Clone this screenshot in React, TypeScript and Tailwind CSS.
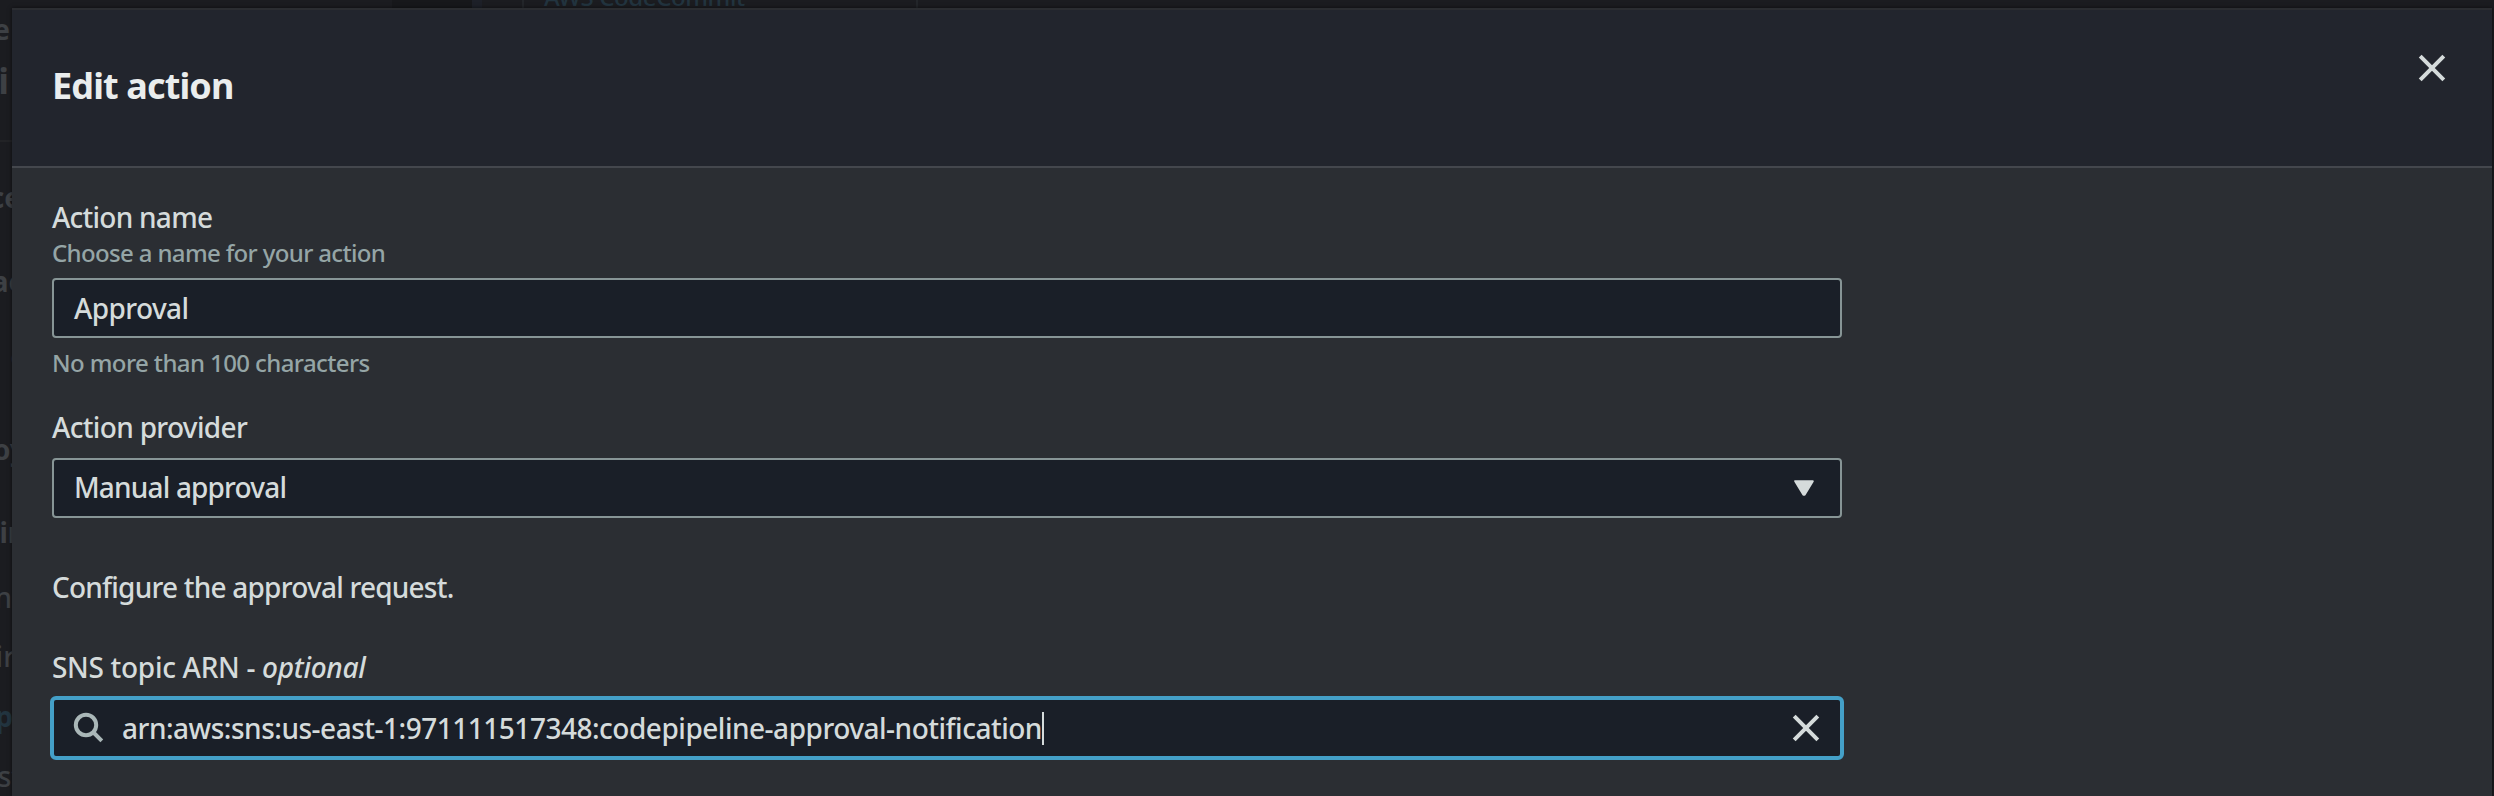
import type { ReactNode } from 'react';

function Cross() {
  return (
    <svg width="28" height="28" viewBox="0 0 28 28" fill="none" stroke="#d5dbdb" strokeWidth="4">
      <path d="M2.2 2.2 25.8 25.8M25.8 2.2 2.2 25.8" />
    </svg>
  );
}

function Label({ className, children }: { className: string; children: ReactNode }) {
  return <div className={`h-10 text-[28px] leading-10 font-medium whitespace-nowrap ${className}`}>{children}</div>;
}

function Hint({ className, children }: { className: string; children: ReactNode }) {
  return <div className={`h-8 text-[24px] leading-8 font-medium whitespace-nowrap text-[#95a5a6] ${className}`}>{children}</div>;
}

function BehindRow({ className, children }: { className: string; children?: ReactNode }) {
  return <div className={`flex w-3 shrink-0 items-end justify-end overflow-hidden whitespace-nowrap ${className}`}>{children}</div>;
}

function PageBehind() {
  return (
    <div className="absolute inset-0 overflow-hidden bg-[#1b1c20] text-[#3d4044]">
      <div className="absolute top-0 left-[392px] flex h-2 overflow-hidden">
        <div className="w-20 shrink-0 bg-[#17181b]" />
        <div className="w-[10px] shrink-0 bg-[#1d2028]" />
        <div className="w-10 shrink-0" />
        <div className="w-[2px] shrink-0 bg-[#23262a]" />
        <div className="w-[392px] shrink-0 pl-[20px] text-[24px] leading-[40px] font-medium tracking-[-0.4px] text-[#22343f]">
          <div className="-mt-[23px] whitespace-nowrap">AWS CodeCommit</div>
        </div>
        <div className="w-[2px] shrink-0 bg-[#23262a]" />
      </div>
      <div className="flex w-3 flex-col overflow-hidden">
        <BehindRow className="mt-[9px] h-10 pr-[2px] text-[28px] leading-10 font-bold">e</BehindRow>
        <BehindRow className="mt-[6px] h-[52px] pr-[3px] text-[36px] leading-[52px] font-bold">i</BehindRow>
        <div className="mt-[33px] h-[2px] bg-[#222326]" />
        <BehindRow className="mt-[35px] h-10 text-[28px] leading-10 font-bold"><span className="-mr-[9px]">ce</span></BehindRow>
        <BehindRow className="mt-[44px] h-10 text-[28px] leading-10 font-bold"><span className="-mr-[11px]">ac</span></BehindRow>
        <BehindRow className="mt-[35px] h-10 text-[28px] leading-10 font-bold"><span className="-mr-[13px]">c</span></BehindRow>
        <BehindRow className="mt-[53px] h-10 text-[28px] leading-10 font-bold"><span className="-mr-[14px]">oy</span></BehindRow>
        <BehindRow className="mt-[43px] h-10 text-[28px] leading-10 font-bold"><span className="-mr-[14px]">in</span></BehindRow>
        <BehindRow className="mt-[25px] h-10 text-[28px] leading-10 font-medium"><span>n</span></BehindRow>
        <BehindRow className="mt-[19px] h-10 text-[28px] leading-10 font-medium"><span className="-mr-[3px]">ir</span></BehindRow>
        <BehindRow className="mt-[20px] h-10 text-[28px] leading-10 font-bold text-[#22343f]"><span className="-mr-[1px]">p</span></BehindRow>
        <BehindRow className="mt-[20px] h-10 text-[28px] leading-10 font-medium"><span className="-mr-[10px]">st</span></BehindRow>
      </div>
    </div>
  );
}

export default function App() {
  return (
    <div className="relative flex h-[796px] w-[2494px] overflow-hidden font-['Noto_Sans','Open_Sans',sans-serif] text-[#d5dbdb]">
      <PageBehind />
      <div className="relative mt-2 ml-3 flex w-[2480px] flex-col bg-[#2b2e33] shadow-[0_0_4px_rgba(0,0,0,0.6)]">
        <header className="flex h-[160px] shrink-0 items-start justify-between border-y-2 border-t-[#2b2d31] border-b-[#44474d] bg-[#22252d] pr-[46px] pl-10">
          <h2 className="mt-[52px] text-[36px] leading-[48px] font-bold tracking-[-0.87px] text-[#eaeded]">Edit action</h2>
          <button className="mt-11" aria-label="Close">
            <Cross />
          </button>
        </header>
        <main className="flex w-[1830px] flex-col pt-[29px] pl-10">
          <Label className="tracking-[-0.75px]">Action name</Label>
          <Hint className="tracking-[-0.65px]">Choose a name for your action</Hint>
          <div className="mt-[9px] flex h-[60px] items-center rounded-[4px] border-2 border-[#879596] bg-[#1a1f28] px-5">
            <Label className="tracking-[-0.6px]">Approval</Label>
          </div>
          <Hint className="mt-[9px] tracking-[-0.6px]">No more than 100 characters</Hint>
          <Label className="mt-[28px] tracking-[-0.67px]">Action provider</Label>
          <div className="mt-[11px] flex h-[60px] items-center justify-between rounded-[4px] border-2 border-[#879596] bg-[#1a1f28] pr-[26px] pl-5">
            <Label className="-mt-[2px] tracking-[-0.83px]">Manual approval</Label>
            <svg width="20" height="16" viewBox="0 0 20 16" fill="#d5dbdb" stroke="#d5dbdb" strokeWidth="2" strokeLinejoin="round">
              <path d="M1.2 1.2h17.6L10.6 14.8H9.4z" />
            </svg>
          </div>
          <Label className="mt-[49px] tracking-[-0.78px]">Configure the approval request.</Label>
          <Label className="mt-10 tracking-[-0.3px]">
            SNS topic ARN - <i>optional</i>
          </Label>
          <div className="mt-[9px] -mr-[2px] -ml-[2px] flex h-16 items-center rounded-[6px] border-4 border-[#44a0c8] bg-[#1a1f28] pr-[20px] pl-[19px]">
            <svg width="32" height="32" viewBox="0 0 32 32" fill="none" stroke="#aab7b8" strokeWidth="4">
              <circle cx="13" cy="13" r="10.2" />
              <path d="m20 20 8.8 8.8" />
            </svg>
            <Label className="ml-[17px] tracking-[-0.49px]">arn:aws:sns:us-east-1:971111517348:codepipeline-approval-notification</Label>
            <div className="h-[33px] w-[2px] bg-[#d5dbdb]" />
            <div className="ml-auto">
              <Cross />
            </div>
          </div>
        </main>
      </div>
    </div>
  );
}
